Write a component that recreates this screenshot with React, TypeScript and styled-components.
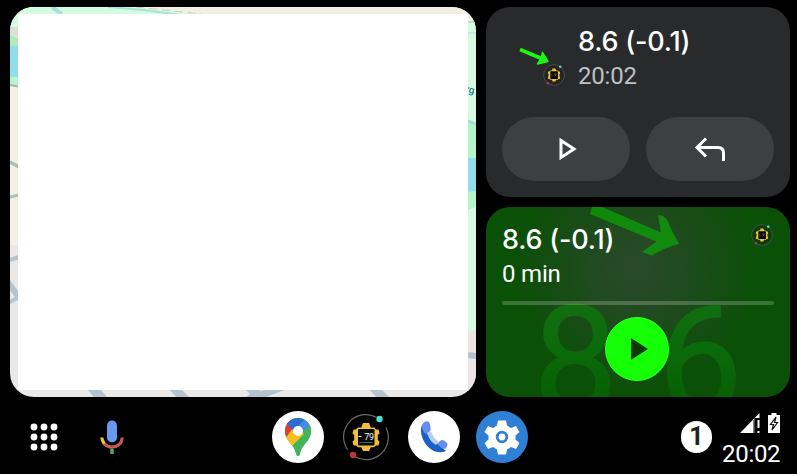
import React from "react";
import styled, { createGlobalStyle } from "styled-components";

const GlobalStyle = createGlobalStyle`
  * { box-sizing: border-box; }
  body { margin: 0; background: #000; overflow: hidden; }
`;

const Screen = styled.div`
  width: 797px;
  height: 474px;
  background: #000;
  color: #fff;
  font-family: Roboto, "Liberation Sans", sans-serif;
  display: flex;
  flex-direction: column;
`;

const Panels = styled.main`
  display: grid;
  grid-template-columns: 466px 304px;
  gap: 10px;
  height: 397px;
  padding: 7px 0 0 10px;
`;

const MapCard = styled.section`
  position: relative;
  display: flex;
  padding: 7px 8px;
  border-radius: 24px;
  overflow: hidden;
  background: #e9e8e6;
`;

const MapArt = styled.svg`
  position: absolute;
  inset: 0;
`;

const MapSheet = styled.div`
  position: relative;
  flex: 1;
  background: #fff;
`;

const SideColumn = styled.div`
  display: flex;
  flex-direction: column;
  gap: 10px;
`;

const Card = styled.section`
  position: relative;
  height: 190px;
  border-radius: 24px;
  overflow: hidden;
  padding: 16px;
  display: flex;
  flex-direction: column;
`;

const MessageCard = styled(Card)`
  background: #282a2c;
  justify-content: space-between;
`;

const MessageHeader = styled.div`
  display: flex;
  height: 70px;
`;

const MessageArt = styled.svg`
  flex: none;
  width: 76px;
  height: 70px;
`;

const Title = styled.div`
  font-family: Inter, "Open Sans", sans-serif;
  font-size: 27px;
  font-weight: 550;
  line-height: 37px;
  letter-spacing: -0.2px;
  white-space: pre;
`;

const Subtitle = styled.div<{ $muted?: boolean }>`
  font-size: 24px;
  line-height: 33px;
  letter-spacing: -0.2px;
  color: ${(p) => (p.$muted ? "#bdc1c6" : "#fff")};
`;

const Actions = styled.div`
  display: grid;
  grid-template-columns: 1fr 1fr;
  gap: 16px;
`;

const PillButton = styled.button`
  height: 64px;
  padding: 0;
  border: 0;
  border-radius: 32px;
  background: #3c4042;
  display: flex;
  align-items: center;
  justify-content: center;
`;

const MediaCard = styled(Card)`
  padding-top: 14px;
  background: radial-gradient(circle 125px at 151px 62px, #29492a 0%, #214b20 35%, #154d13 68%, #0a5006 100%);
`;

const MediaArt = styled.svg`
  position: absolute;
  inset: 0;
`;

const MediaHeader = styled.div`
  position: relative;
  display: flex;
  justify-content: space-between;
  height: 80px;
`;

const AppBadge = styled.div`
  padding-top: 2px;
`;

const Progress = styled.div`
  position: relative;
  height: 4px;
  border-radius: 2px;
  background: rgba(255, 255, 255, 0.2);
`;

const PlayButton = styled.button`
  position: relative;
  width: 64px;
  height: 64px;
  margin: 12px 0 0 103px;
  padding: 0;
  border: 1px solid #35ff2c;
  border-radius: 50%;
  background: #14ff06;
  display: flex;
  align-items: center;
  justify-content: center;
`;

const NavBar = styled.nav`
  display: flex;
  align-items: center;
  height: 77px;
  padding: 3px 16px 0 30px;
`;

const NavGroup = styled.div<{ $gap: number; $width?: number }>`
  display: flex;
  flex: none;
  align-items: center;
  gap: ${(p) => p.$gap}px;
  ${(p) => (p.$width ? `width: ${p.$width}px;` : "")}
`;

const AppIcon = styled.div<{ $color: string }>`
  width: 52px;
  height: 52px;
  border-radius: 50%;
  background: ${(p) => p.$color};
  display: flex;
`;

const Count = styled.div`
  width: 31px;
  height: 32px;
  border-radius: 16px;
  background: #fff;
  color: #202124;
  display: flex;
  align-items: center;
  justify-content: center;
  font-size: 25px;
  font-weight: 700;
  line-height: 32px;
`;

const Status = styled.div`
  display: flex;
  flex-direction: column;
  align-items: flex-end;
  height: 48px;
  gap: 7px;
`;

const Clock = styled.div`
  font-size: 24px;
  line-height: 28px;
  letter-spacing: -0.3px;
`;

function WatchIcon({ size, x, y, detailed }: { size: number; x?: number; y?: number; detailed?: boolean }) {
  return (
    <svg width={size} height={size} x={x} y={y} viewBox="0 0 52 52">
      {detailed ? (
        <path d="M7.600 38.700A22.300 22.300 0 0 1 36.500 6.300M46 16.500A22.300 22.300 0 0 1 14.500 45.500" fill="none" stroke="#6a6a6a" strokeWidth="1.200" />
      ) : (
        <circle cx="26" cy="26" r="22.500" fill="#181a1a" fillOpacity="0.35" stroke="#555" strokeWidth="1.700" />
      )}
      <path d="M23 12h6l1.700 4.500h3.500L36 18.500h2.500l1 4-1.700 1.500v5l1.700 1.500-1 4H36l-2 1.800h-3.300L29 40h-6l-1.700-3.700H18l-2-1.800h-2.500l-1-4 1.700-1.500v-5l-1.700-1.500 1-4H16l1.800-2h3.500z" fill="#f0bf38" />
      <rect x="18" y="18" width="16.500" height="16.500" rx="1" fill="#080909" />
      {detailed ? (
        <>
          <path d="M18.500 25.500h3" stroke="#fff" />
          <text x="24.300" y="28.800" fill="#eef3f6" fontSize="9" fontFamily="Roboto, sans-serif" textLength="9.800">79</text>
          <path d="M19.500 31.500h13" stroke="#26704a" />
        </>
      ) : (
        <path d="M19 26h4M26 24h5l-3 5" stroke="#777" strokeWidth="1.500" fill="none" />
      )}
      <circle cx="39.500" cy="8" r={detailed ? 3.200 : 2.700} fill="#4de0cf" />
      <circle cx="13" cy="44" r={detailed ? 3.200 : 2.700} fill="#bf3441" />
    </svg>
  );
}

function MapBackground() {
  return (
    <MapArt width="466" height="390" viewBox="0 0 466 390">
      <path d="M0 0H110L190 7H0z" fill="#d3fce0" />
      <path d="M110 0H466V18H0L190 7z" fill="#f3efe3" />
      <path d="M0 0H110L190 7H8v13H0z" fill="#d3fce0" />
      <path d="M42 0L52 7" stroke="#a6e3df" strokeWidth="4" />
      <path d="M98 0L134 3 171 8" stroke="#a6e3df" strokeWidth="2" fill="none" />
      <path d="M126 0L192 7" stroke="#cccac1" strokeWidth="1" strokeDasharray="8 5" />
      <path d="M0 20h8v10l-8-2z" fill="#dedfdb" />
      <path d="M0 28l8 3v48H0z" fill="#adedbd" />
      <path d="M0 39h8v31H0z" fill="#90deeb" />
      <path d="M0 70h8v8H0z" fill="#b5f5ca" />
      <path d="M0 78h8v160H0z" fill="#f3efe1" />
      <path d="M0 78l8 1.500" stroke="#9fb8b2" strokeWidth="2" />
      <path d="M0 155l9 5" stroke="#abbdc5" strokeWidth="3.500" />
      <path d="M0 190l9-2" stroke="#abbdc5" strokeWidth="3" />
      <path d="M0 253l9-3" stroke="#b4c3ce" strokeWidth="4" />
      <path d="M0 273L8 284v9l-8 4v-4l5-3-5-7z" fill="#b4c3ce" />
      <path d="M458 15h8v310h-8z" fill="#d3fce0" />
      <path d="M455 15h11M458 26h8" stroke="#9edfe0" />
      <path d="M455 15h11" stroke="#c8c4b7" />
      <path d="M458 114l8 2v84l-8 3z" fill="#b3f4c9" />
      <path d="M455 113l11 4" stroke="#9adfe2" strokeWidth="3" />
      <path d="M458 151h8v33l-8 1z" fill="#90deeb" />
      <text x="455" y="85" transform="rotate(12 455 85)" fill="#267f84" fontSize="10" fontWeight="500" fontFamily="Roboto, sans-serif">rg</text>
      <path d="M458 325l8-2v67h-8z" fill="#e9e6e5" />
      <path d="M458 348l8 1" stroke="#b0c0ce" strokeWidth="6" />
      <path d="M77 382h13l7 8H84zM159 382h12l8 8h-13zM359 382h12l8 8h-13z" fill="#b4c3ce" />
      <path d="M235 382h12l4 2 6-2h20l-21 8h-20l4-3z" fill="#b4c3ce" />
    </MapArt>
  );
}

function MediaBackground() {
  return (
    <MediaArt width="304" height="190" viewBox="0 0 304 190">
      <defs>
        <linearGradient id="digits" x1="0" y1="95" x2="0" y2="190" gradientUnits="userSpaceOnUse">
          <stop offset="0" stopColor="#136f11" />
          <stop offset=".5" stopColor="#0a6b0a" />
          <stop offset="1" stopColor="#076004" />
        </linearGradient>
        <linearGradient id="pointer" x1="104" y1="0" x2="194" y2="40" gradientUnits="userSpaceOnUse">
          <stop offset="0" stopColor="#0d8a09" />
          <stop offset="1" stopColor="#148b10" />
        </linearGradient>
      </defs>
      <text x="47" y="206" fill="url(#digits)" stroke="url(#digits)" strokeWidth="1" fontSize="151" fontFamily="Roboto, sans-serif">8.6</text>
      <path d="M106 0H116L175 25.500 172 8C178 8 181 12 183 17 186 25 190 31 193.500 37 184 39 174 43 166 48.500L156 45 170.500 34.500 104 7z" fill="url(#pointer)" />
    </MediaArt>
  );
}

export default function App() {
  return (
    <>
      <GlobalStyle />
      <Screen>
        <Panels>
          <MapCard>
            <MapBackground />
            <MapSheet />
          </MapCard>
          <SideColumn>
            <MessageCard>
              <MessageHeader>
                <MessageArt viewBox="0 0 76 70">
                  <path d="M18 26.500L42 36.500" stroke="#1cf516" strokeWidth="3.700" />
                  <path d="M40.500 29.500L46 38.500 35.500 41 39 35.500z" fill="#1cf516" stroke="#1cf516" strokeWidth="1.500" strokeLinejoin="round" />
                  <WatchIcon size={24} x={40} y={40} />
                </MessageArt>
                <div>
                  <Title>8.6 (-0.1)</Title>
                  <Subtitle $muted>20:02</Subtitle>
                </div>
              </MessageHeader>
              <Actions>
                <PillButton aria-label="Play">
                  <svg width="32" height="32" viewBox="0 0 32 32" fill="none" stroke="#fff" strokeWidth="3">
                    <path d="M11 7.500v17L24 16z" />
                  </svg>
                </PillButton>
                <PillButton aria-label="Reply">
                  <svg width="32" height="32" viewBox="0 0 32 32" fill="none" stroke="#fff" strokeWidth="3">
                    <path d="M12 5.500L3 14.500l9 9M3.500 14.500H24Q29.500 14.500 29.500 20v8" />
                  </svg>
                </PillButton>
              </Actions>
            </MessageCard>
            <MediaCard>
              <MediaBackground />
              <MediaHeader>
                <div>
                  <Title>8.6 (-0.1)</Title>
                  <Subtitle>0 min</Subtitle>
                </div>
                <AppBadge>
                  <WatchIcon size={24} />
                </AppBadge>
              </MediaHeader>
              <Progress />
              <PlayButton aria-label="Play">
                <svg width="32" height="32" viewBox="0 0 32 32">
                  <path d="M10 5v22L27 16z" fill="#073b03" />
                </svg>
              </PlayButton>
            </MediaCard>
          </SideColumn>
        </Panels>
        <NavBar>
          <NavGroup $gap={42} $width={242}>
            <svg width="28" height="28" viewBox="0 0 28 28" fill="#fff">
              {[4, 14, 24].map((y) => [4, 14, 24].map((x) => <circle key={`${x}-${y}`} cx={x} cy={y} r="3.400" />))}
            </svg>
            <svg width="24" height="34" viewBox="0 0 24 34" fill="none">
              <rect x="7" y="0.500" width="10" height="22" rx="5" fill="#6799f0" />
              <path d="M1.800 17.500Q2 21 4.500 24" stroke="#eac341" strokeWidth="3.200" />
              <path d="M4.500 24Q7.500 27 12 27Q21.800 26.500 22.200 17.500" stroke="#c95855" strokeWidth="3.200" />
              <path d="M12 28.500v5.500" stroke="#50a868" strokeWidth="3.500" />
            </svg>
          </NavGroup>
          <NavGroup $gap={16} $width={409}>
            <AppIcon $color="#fff">
              <svg width="52" height="52" viewBox="0 0 52 52">
                <clipPath id="pin">
                  <path d="M26 7C18.500 7 13 12.800 13 20c0 9 7 12 10 19 1.200 3 1.200 6 3 6s2-3 3-6c3-7 10-10 10-19C39 12.800 33.500 7 26 7z" />
                </clipPath>
                <g clipPath="url(#pin)">
                  <path d="M0 0h52v52H0z" fill="#40b45a" />
                  <path d="M12 37L26 20l5 5-14 16z" fill="#f5bf19" />
                  <path d="M8 32L22 15l5 5-12 15z" fill="#f5bf19" />
                  <path d="M5 5h12l7 8L12 29 5 27z" fill="#dd3c37" />
                  <path d="M14 12l8 8L36 5H18z" fill="#2d6bcf" />
                  <path d="M24 19L36 4l9 8-17 13z" fill="#4688ef" />
                  <path d="M17 35L39 12l6 8-20 30z" fill="#40b45a" />
                  <path d="M14 33L26 19l6 4-16 16z" fill="#f5bf19" />
                </g>
                <circle cx="26" cy="20" r="5" fill="#fff" />
              </svg>
            </AppIcon>
            <AppIcon $color="#000">
              <WatchIcon size={52} detailed />
            </AppIcon>
            <AppIcon $color="#fff">
              <svg width="52" height="52" viewBox="0 0 52 52">
                <path d="M13.500 15C11.500 22 15 32 22 37.500 27 41.500 33 42.500 38 40L30 33C25 30 21 26 19 21z" fill="#1b5fc4" />
                <path d="M19 22l4-1.500c2 5 4 7.500 7.500 10L28 34c-4-2-7.500-7-9-12z" fill="#b9cbf3" />
                <path d="M14 14c1-2.500 3.500-4 5.500-3.800 2 .5 2.500 3 3 6 .4 3-.1 4-2 5l-3 2c-2-3-4.500-6-3.500-9.200zM29 33l3-3c2-2 4-.5 6 1 2.500 1.500 1.500 4.500-.5 6.500-2 1-5-1-8.500-4.500z" fill="#638df0" />
              </svg>
            </AppIcon>
            <AppIcon $color="#2f80d5">
              <svg width="52" height="52" viewBox="0 0 52 52">
                <path d="M22 9.500h8l1 5 4 2.500 5-2 3.500 6-4 3.500v4l4 3.500-3.500 6-5-2-4 2.500-1 5h-8l-1-5-4-2.500-5 2L8.500 32l4-3.500v-4l-4-3.500 3.500-6 5 2 4-2.500z" fill="#fff" />
                <circle cx="26" cy="26" r="4.800" fill="#fff" stroke="#2f80d5" strokeWidth="2.800" />
              </svg>
            </AppIcon>
          </NavGroup>
          <NavGroup $gap={10}>
            <Count>1</Count>
            <Status>
              <NavGroup $gap={8}>
                <svg width="20" height="20" viewBox="0 0 20 20" fill="#fff">
                  <path d="M0 20L19.500 0v5h-5v15zM17.500 7h2v8h-2zM17.500 18h2v2h-2z" />
                  <path d="M14 7v13" stroke="#000" />
                </svg>
                <svg width="12" height="20" viewBox="0 0 12 20">
                  <path d="M3.500 0h5v2H12v18H0V2h3.500z" fill="#fff" />
                  <path d="M8 4L2.500 11.500h3l-1.500 5.500L9.500 9.500H6.500z" fill="#fff" stroke="#111" strokeWidth="1.200" />
                </svg>
              </NavGroup>
              <Clock>20:02</Clock>
            </Status>
          </NavGroup>
        </NavBar>
      </Screen>
    </>
  );
}
